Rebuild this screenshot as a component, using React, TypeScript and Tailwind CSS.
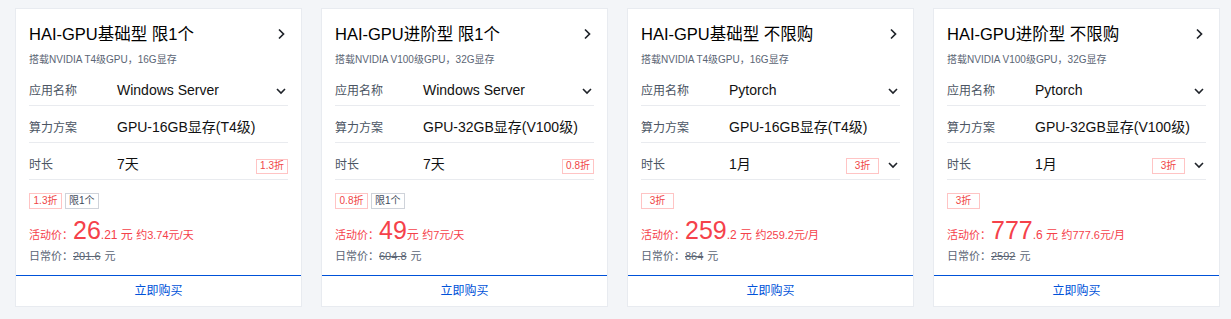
import React from 'react';

type Plan = {
  title: string;
  spec: string;
  app: string;
  gpu: string;
  duration: string;
  rowBadge: string;
  durationSelect: boolean;
  tags: { text: string; kind: 'red' | 'grey' }[];
  big: string;
  small: string;
  per: string;
  normal: string;
};

const PLANS: Plan[] = [
  {
    title: 'HAI-GPU基础型 限1个',
    spec: '搭载NVIDIA T4级GPU，16G显存',
    app: 'Windows Server',
    gpu: 'GPU-16GB显存(T4级)',
    duration: '7天',
    rowBadge: '1.3折',
    durationSelect: false,
    tags: [{ text: '1.3折', kind: 'red' }, { text: '限1个', kind: 'grey' }],
    big: '26',
    small: '.21',
    per: '约3.74元/天',
    normal: '201.6',
  },
  {
    title: 'HAI-GPU进阶型 限1个',
    spec: '搭载NVIDIA V100级GPU，32G显存',
    app: 'Windows Server',
    gpu: 'GPU-32GB显存(V100级)',
    duration: '7天',
    rowBadge: '0.8折',
    durationSelect: false,
    tags: [{ text: '0.8折', kind: 'red' }, { text: '限1个', kind: 'grey' }],
    big: '49',
    small: '',
    per: '约7元/天',
    normal: '604.8',
  },
  {
    title: 'HAI-GPU基础型 不限购',
    spec: '搭载NVIDIA T4级GPU，16G显存',
    app: 'Pytorch',
    gpu: 'GPU-16GB显存(T4级)',
    duration: '1月',
    rowBadge: '3折',
    durationSelect: true,
    tags: [{ text: '3折', kind: 'red' }],
    big: '259',
    small: '.2',
    per: '约259.2元/月',
    normal: '864',
  },
  {
    title: 'HAI-GPU进阶型 不限购',
    spec: '搭载NVIDIA V100级GPU，32G显存',
    app: 'Pytorch',
    gpu: 'GPU-32GB显存(V100级)',
    duration: '1月',
    rowBadge: '3折',
    durationSelect: true,
    tags: [{ text: '3折', kind: 'red' }],
    big: '777',
    small: '.6',
    per: '约777.6元/月',
    normal: '2592',
  },
];

const ChevronDown = () => (
  <svg width="14" height="8" viewBox="0 0 14 8" className="shrink-0">
    <path d="M3 2l4 4 4-4" fill="none" stroke="#1f2329" strokeWidth="1.6" />
  </svg>
);

const ChevronRight = () => (
  <svg width="14" height="12" viewBox="0 0 14 12" className="shrink-0">
    <path d="M5 1.5l4.5 4.5-4.5 4.5" fill="none" stroke="#1f2329" strokeWidth="1.7" />
  </svg>
);

function Badge({ text, kind, wide }: { text: string; kind: 'red' | 'grey'; wide?: boolean }) {
  const tone = kind === 'red' ? 'border-[#ffc4c4] text-[#f04646]' : 'border-[#cfd3da] text-[#3d4a5a]';
  return (
    <span
      className={`${tone} ${wide ? 'min-w-[33px] h-[16px]' : 'min-w-[31px] h-[15px]'} inline-flex items-center justify-center border px-[3px] text-[10px] leading-none bg-white`}
    >
      {text}
    </span>
  );
}

function Row({ label, children }: { label: string; children: React.ReactNode }) {
  return (
    <div className="flex h-[37px] items-center pt-[7px] border-b border-[#e9ebef]">
      <span className="w-[88px] shrink-0 text-[12px] text-[#4b5563]">{label}</span>
      <div className="flex flex-1 items-center text-[14px] text-[#111]">{children}</div>
    </div>
  );
}

function Card({ p }: { p: Plan }) {
  return (
    <div className="flex h-[299px] w-[287px] shrink-0 flex-col border border-[#e8ebf0] bg-white">
      <div className="px-[13px] pt-[13px]">
        <div className="flex h-[24px] items-center justify-between">
          <span className="text-[16.5px] text-black">{p.title}</span>
          <ChevronRight />
        </div>
        <div className="mt-[6px] mb-[1px] h-[16px] text-[10px] leading-[16px] text-[#5b6574]">{p.spec}</div>
        <Row label="应用名称">
          <span className="flex-1">{p.app}</span>
          <ChevronDown />
        </Row>
        <Row label="算力方案">
          <span className="flex-1">{p.gpu}</span>
        </Row>
        <Row label="时长">
          <span className="flex-1">{p.duration}</span>
          <span className={p.durationSelect ? 'mr-[7px]' : ''}>
            <Badge text={p.rowBadge} kind="red" wide={p.durationSelect} />
          </span>
          {p.durationSelect && <ChevronDown />}
        </Row>
        <div className="mt-[13px] flex h-[16px] gap-[3px]">
          {p.tags.map((t) => (
            <Badge key={t.text} text={t.text} kind={t.kind} wide />
          ))}
        </div>
        <div className="mt-[9px] flex h-[29px] items-baseline text-[#f5414a]">
          <span className="w-[44px] shrink-0 text-[11px]">活动价：</span>
          <span className="text-[25px] leading-none">{p.big}</span>
          <span className="text-[12px]">
            {p.small} 元 <span className="text-[11px]">{p.per}</span>
          </span>
        </div>
        <div className="mt-[1px] flex h-[16px] items-center text-[11px] text-[#5b6574]">
          <span className="w-[44px] shrink-0">日常价：</span>
          <span className="line-through">{p.normal}</span>
          <span className="ml-[4px]">元</span>
        </div>
      </div>
      <div className="mt-auto flex h-[31px] items-center justify-center border-t border-[#0052d9] text-[12px] text-[#0052d9]">
        立即购买
      </div>
    </div>
  );
}

export default function App() {
  return (
    <div
      className="flex h-[319px] w-[1231px] gap-[19px] bg-[#f3f5f8] pl-[15px] pt-[8px]"
      style={{ fontFamily: '"Liberation Sans", "Noto Sans CJK SC", sans-serif' }}
    >
      {PLANS.map((p) => (
        <Card key={p.title} p={p} />
      ))}
    </div>
  );
}
